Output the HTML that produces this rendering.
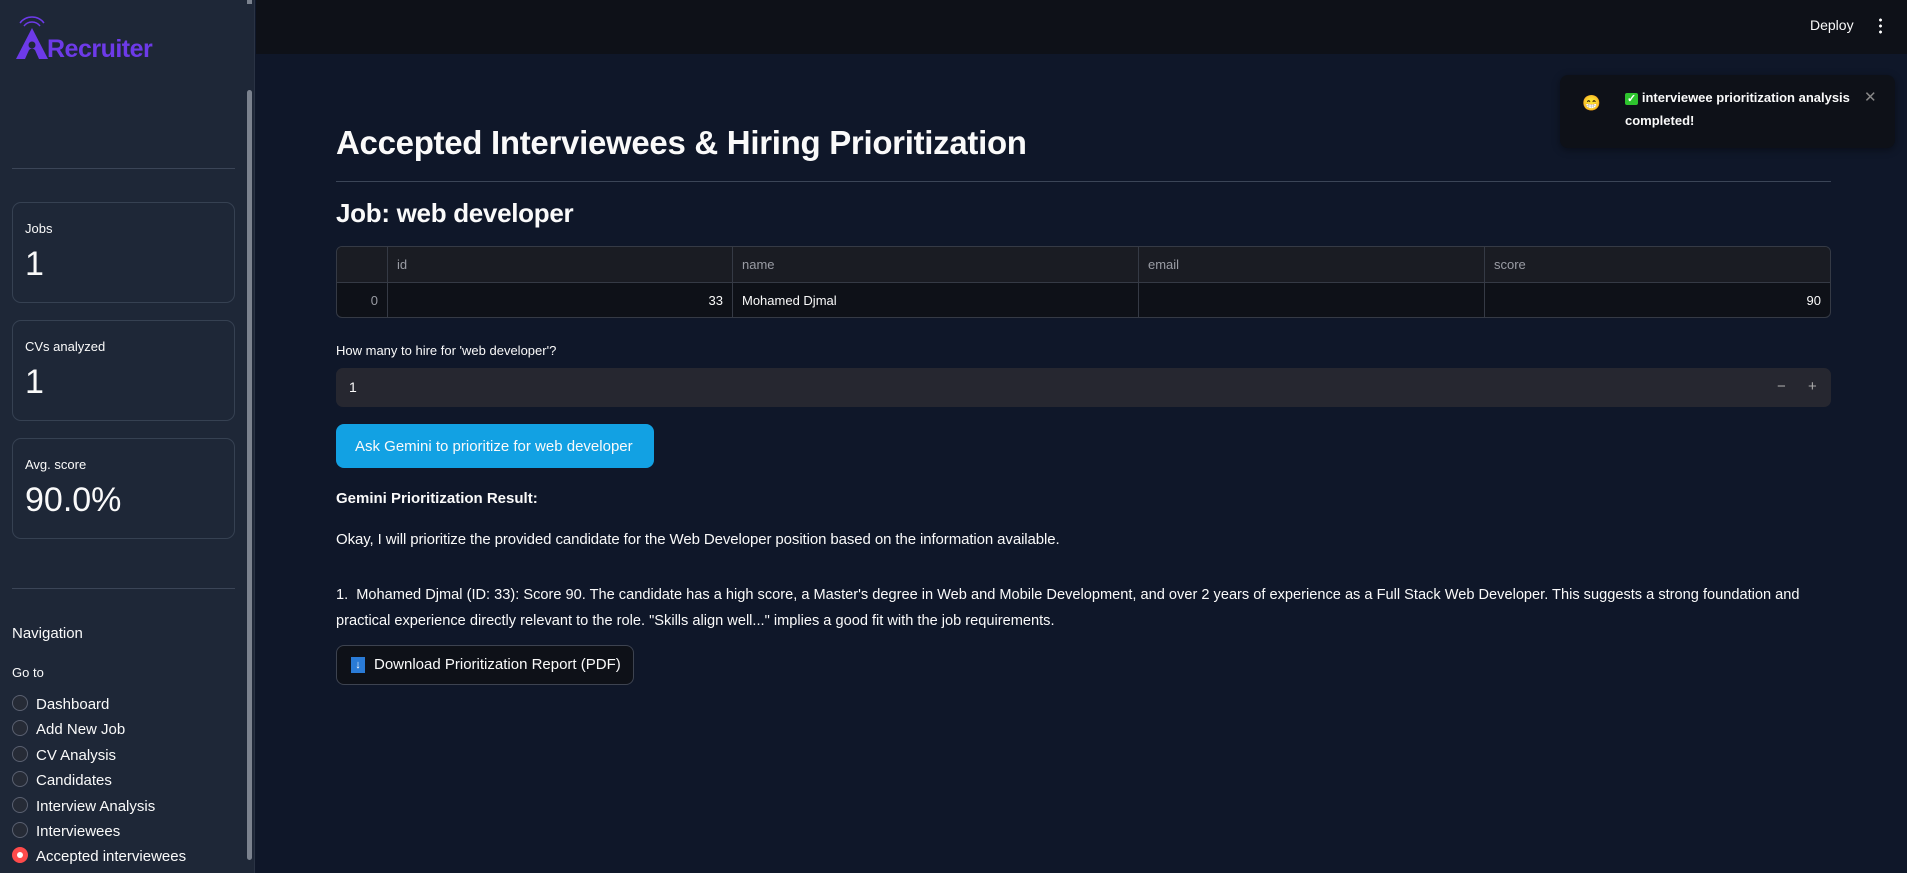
<!DOCTYPE html>
<html><head><meta charset="utf-8"><style>
*{box-sizing:border-box;margin:0;padding:0}
body{width:1907px;height:873px;overflow:hidden;background:#0f1729;font-family:"Liberation Sans",sans-serif;color:#fafafa;position:relative}
.abs{position:absolute;white-space:nowrap}
#sb{position:absolute;left:0;top:0;width:255px;height:873px;background:#1e2737;border-right:1px solid #2a3344}
#top{position:absolute;left:256px;top:0;right:0;height:54px;background:#0e1118}
.box{position:absolute;left:12px;width:223px;height:101px;border:1px solid #364152;border-radius:9px}
.box .l{position:absolute;left:12px;top:18px;font-size:13px}
.box .v{position:absolute;left:12px;top:42px;font-size:34px;font-weight:300}
.hr{position:absolute;height:1px;background:#3b4557}
.rad{position:absolute;left:12px;width:16px;height:16px;border-radius:50%;border:1px solid #5a6070;background:#262b36}
.rl{position:absolute;left:36px;font-size:15px;white-space:nowrap}
td{border-right:1px solid #353a45;border-bottom:1px solid #353a45;font-size:13px;padding:0 9px}
</style></head><body>
<div id="sb">
 <svg class="abs" style="left:14px;top:16px" width="36" height="44" viewBox="0 0 36 44"><path d="M10 10a10 10 0 0 1 16 0M6 7a15 15 0 0 1 24 0" stroke="#6d3ae8" stroke-width="1.5" fill="none"/><path d="M18 12L2 43h9l4-9a4 4 0 0 1 6 0l4 9h9z" fill="#6d3ae8"/><circle cx="18" cy="29" r="3.5" fill="#1e2737"/></svg>
 <div class="abs" style="left:47px;top:35px;font-size:25px;font-weight:bold;color:#6d3ae8;letter-spacing:-0.5px">Recruiter</div>
 <div class="abs" style="left:247px;top:90px;width:5px;height:770px;background:#7b828e;border-radius:3px"></div>
 <div class="abs" style="left:247px;top:0;width:5px;height:4px;background:#7b828e"></div>
 <div class="hr" style="left:12px;top:168px;width:223px"></div>
 <div class="box" style="top:202px"><div class="l">Jobs</div><div class="v">1</div></div>
 <div class="box" style="top:320px"><div class="l">CVs analyzed</div><div class="v">1</div></div>
 <div class="box" style="top:438px"><div class="l">Avg. score</div><div class="v">90.0%</div></div>
 <div class="hr" style="left:12px;top:588px;width:223px"></div>
 <div class="abs" style="left:12px;top:625px;font-size:15px">Navigation</div>
 <div class="abs" style="left:12px;top:665px;font-size:13px">Go to</div>
 <div class="rad" style="top:695px"></div><div class="rl" style="top:696px">Dashboard</div>
 <div class="rad" style="top:720px"></div><div class="rl" style="top:721px">Add New Job</div>
 <div class="rad" style="top:746px"></div><div class="rl" style="top:747px">CV Analysis</div>
 <div class="rad" style="top:771px"></div><div class="rl" style="top:772px">Candidates</div>
 <div class="rad" style="top:797px"></div><div class="rl" style="top:798px">Interview Analysis</div>
 <div class="rad" style="top:822px"></div><div class="rl" style="top:823px">Interviewees</div>
 <div class="rad" style="top:847px;background:#ff4b4b;border-color:#ff4b4b"><div style="position:absolute;left:4px;top:4px;width:6px;height:6px;border-radius:50%;background:#fff"></div></div><div class="rl" style="top:848px">Accepted interviewees</div>
</div>
<div id="top"></div>
<div class="abs" style="left:1810px;top:17px;font-size:14px">Deploy</div>
<div class="abs" style="left:1879px;top:17px;width:3px;height:17px;background:radial-gradient(circle,#fff 1.3px,transparent 1.6px) 0 0/3px 6px"></div>

<div class="abs" style="left:1560px;top:75px;width:335px;height:73px;background:#0e1118;border-radius:8px;box-shadow:0 2px 8px rgba(0,0,0,.4)"></div>
<div class="abs" style="left:1582px;top:94px;font-size:15px">😁</div>
<div class="abs" style="left:1625px;top:87px;font-size:13px;font-weight:bold;line-height:22px"><span style="background:#2ec42e;color:#fff;font-size:11px;padding:0 2px;border-radius:2px">✓</span> interviewee prioritization analysis<br>completed!</div>
<div class="abs" style="left:1864px;top:88px;font-size:15px;color:#888">✕</div>

<div class="abs" style="left:336px;top:124px;font-size:33px;font-weight:bold;letter-spacing:-0.3px">Accepted Interviewees &amp; Hiring Prioritization</div>
<div class="hr" style="left:336px;top:181px;width:1495px"></div>
<div class="abs" style="left:336px;top:198px;font-size:26px;font-weight:bold;letter-spacing:-0.3px">Job: web developer</div>

<table class="abs" style="left:336px;top:246px;width:1495px;height:71px;border-collapse:separate;border-spacing:0;border:1px solid #353a45;border-radius:6px;overflow:hidden;background:#0e1118">
<tr style="height:36px;background:#1a1c23;color:#9a9ca4"><td style="width:51px"></td><td style="width:345px">id</td><td style="width:406px">name</td><td style="width:346px">email</td><td style="border-right:0">score</td></tr>
<tr style="height:34px"><td style="text-align:right;color:#9a9ca4;border-bottom:0">0</td><td style="text-align:right;border-bottom:0">33</td><td style="border-bottom:0">Mohamed Djmal</td><td style="border-bottom:0"></td><td style="text-align:right;border:0">90</td></tr>
</table>

<div class="abs" style="left:336px;top:343px;font-size:13px">How many to hire for 'web developer'?</div>
<div class="abs" style="left:336px;top:368px;width:1495px;height:39px;background:#262730;border-radius:7px"></div>
<div class="abs" style="left:349px;top:379px;font-size:14px">1</div>
<div class="abs" style="left:1777px;top:378px;font-size:15px;color:#aaa">−</div>
<div class="abs" style="left:1808px;top:378px;font-size:15px;color:#aaa">+</div>

<div class="abs" style="left:336px;top:424px;width:318px;height:44px;background:#12a1e3;border-radius:8px"></div>
<div class="abs" style="left:355px;top:438px;font-size:15px">Ask Gemini to prioritize for web developer</div>

<div class="abs" style="left:336px;top:490px;font-size:15px;font-weight:bold">Gemini Prioritization Result:</div>
<div class="abs" style="left:336px;top:531px;font-size:15px;letter-spacing:-0.1px">Okay, I will prioritize the provided candidate for the Web Developer position based on the information available.</div>
<div class="abs" style="left:336px;top:582px;font-size:14.6px;line-height:26px">1.&nbsp; Mohamed Djmal (ID: 33): Score 90. The candidate has a high score, a Master's degree in Web and Mobile Development, and over 2 years of experience as a Full Stack Web Developer. This suggests a strong foundation and<br>practical experience directly relevant to the role. "Skills align well..." implies a good fit with the job requirements.</div>

<div class="abs" style="left:336px;top:645px;width:298px;height:40px;border:1px solid #3d4350;border-radius:8px;background:#0e1118"></div>
<div class="abs" style="left:351px;top:657px;width:14px;height:16px;background:#2a7bd6;color:#fff;font-size:11px;text-align:center;line-height:16px">↓</div>
<div class="abs" style="left:374px;top:656px;font-size:15px">Download Prioritization Report (PDF)</div>
</body></html>
